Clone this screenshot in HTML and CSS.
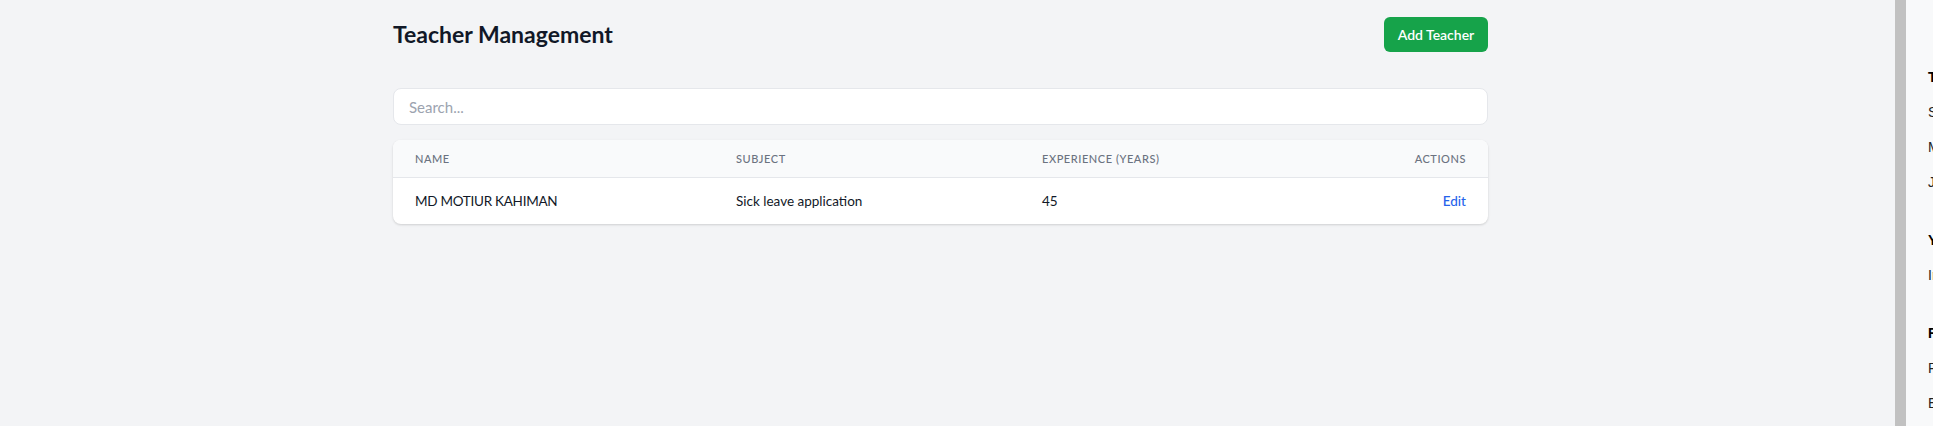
FILE: index.html
```html
<!DOCTYPE html>
<html lang="en">
<head>
<meta charset="utf-8">
<title>Teacher Management</title>
<link rel="stylesheet" href="styles.css">
</head>
<body>
<div class="app">
  <main class="main">
    <div class="container">
      <header class="page-head">
        <h1 class="title">Teacher Management</h1>
        <button class="btn-add" type="button">Add Teacher</button>
      </header>
      <input class="search" type="text" placeholder="Search...">
      <div class="card">
        <table class="table">
          <colgroup>
            <col class="c-name"><col class="c-subject"><col class="c-exp"><col class="c-act">
          </colgroup>
          <thead>
            <tr>
              <th>Name</th>
              <th>Subject</th>
              <th>Experience (Years)</th>
              <th class="right">Actions</th>
            </tr>
          </thead>
          <tbody>
            <tr>
              <td class="name">MD MOTIUR KAHIMAN</td>
              <td>Sick leave application</td>
              <td>45</td>
              <td class="right"><a class="edit" href="#">Edit</a></td>
            </tr>
          </tbody>
        </table>
      </div>
    </div>
  </main>
  <div class="scrollbar"></div>
  <aside class="panel">
    <div class="group">
      <div class="line bold">Today</div>
      <div class="line">Schedule</div>
      <div class="line">Meetings</div>
      <div class="line">Journal</div>
    </div>
    <div class="group">
      <div class="line bold">Your notes</div>
      <div class="line">Inbox</div>
    </div>
    <div class="group">
      <div class="line bold">Files</div>
      <div class="line">Recent</div>
      <div class="line">Exports</div>
    </div>
  </aside>
</div>
</body>
</html>
```

FILE: styles.css
```css
* { box-sizing: border-box; }
html, body { margin: 0; padding: 0; height: 100%; }
body {
  font-family: Lato, "Noto Sans", sans-serif;
  color: #111827;
  background: #f3f4f6;
  overflow: hidden;
}
.app {
  display: flex;
  height: 426px;
}
.main {
  flex: 0 0 1895px;
  background: #f3f4f6;
  padding: 17px 0 0 393px;
}
.container {
  width: 1095px;
}
.page-head {
  display: flex;
  justify-content: space-between;
  align-items: center;
  height: 35px;
  margin-bottom: 36px;
}
.title {
  margin: 0 0 2px;
  font-size: 23px;
  font-weight: 700;
  color: #111827;
}
.btn-add {
  height: 35px;
  width: 104px;
  border: none;
  border-radius: 6px;
  background: #16a34a;
  color: #fff;
  font-family: inherit;
  font-size: 14px;
  font-weight: 600;
  padding: 0;
}
.search {
  display: block;
  width: 100%;
  height: 37px;
  border: 1px solid #e5e7eb;
  border-radius: 8px;
  background: #fff;
  padding: 0 15px;
  font-family: inherit;
  font-size: 15px;
  color: #111827;
  margin-bottom: 15px;
  outline: none;
}
.search::placeholder { color: #9ca3af; }
.card {
  background: #fff;
  border-radius: 8px;
  box-shadow: 0 1px 3px rgba(0,0,0,0.1), 0 1px 2px rgba(0,0,0,0.06);
  overflow: hidden;
}
.table {
  width: 100%;
  border-collapse: collapse;
  table-layout: fixed;
}
.c-name { width: 321px; }
.c-subject { width: 306px; }
.c-exp { width: 362px; }
.c-act { width: 106px; }
.table th {
  background: #f9fafb;
  height: 37px;
  padding: 0 22px;
  text-align: left;
  font-size: 11px;
  font-weight: 500;
  letter-spacing: 0.05em;
  text-transform: uppercase;
  color: #6b7280;
  border-bottom: 1px solid #e5e7eb;
}
.table td {
  height: 47px;
  padding: 0 22px;
  font-size: 13.5px;
  color: #111827;
  white-space: nowrap;
}
.table td.name { letter-spacing: -0.02em; }
.table .right { text-align: right; }
.edit {
  color: #2563eb;
  text-decoration: none;
  font-weight: 500;
}
.scrollbar {
  flex: 0 0 11px;
  background: #c1c1c1;
}
.panel {
  flex: 1 1 auto;
  background: #f8f9fa;
  padding: 60px 0 0 22px;
  overflow: hidden;
  white-space: nowrap;
  font-family: "Liberation Sans", Arial, sans-serif;
  font-size: 14px;
  color: #222;
}
.group { margin-bottom: 23px; }
.line { line-height: 35px; }
.line.bold { font-weight: 700; color: #000; }
```
